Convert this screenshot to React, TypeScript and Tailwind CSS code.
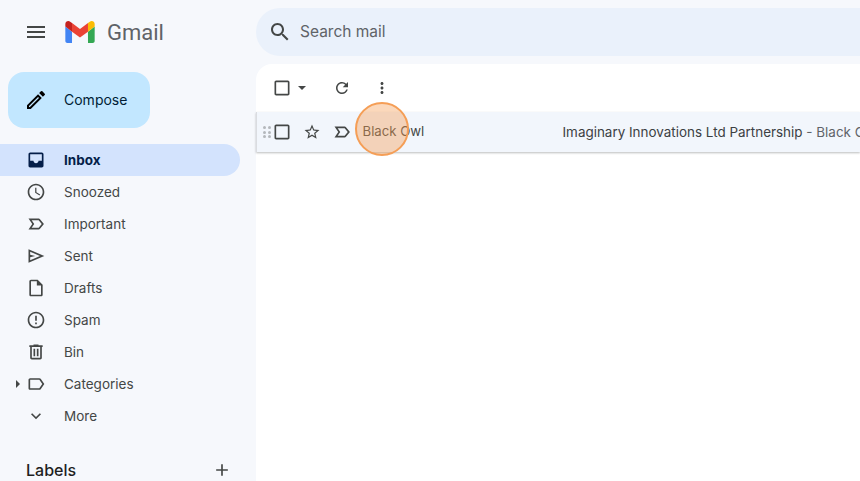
import type { ReactNode } from "react";

const font = { fontFamily: "Inter, Roboto, sans-serif" };

function Icon({ d, className = "h-5 w-5", fill = "#444746" }: { d: string; className?: string; fill?: string }) {
  return (
    <svg viewBox="0 0 24 24" className={`shrink-0 ${className}`} fill={fill} aria-hidden>
      <path d={d} />
    </svg>
  );
}

const paths = {
  menu: "M3 18h18v-2H3v2zm0-5h18v-2H3v2zm0-7v2h18V6H3z",
  search:
    "M15.5 14h-.79l-.28-.27C15.41 12.59 16 11.11 16 9.5 16 5.91 13.09 3 9.5 3S3 5.91 3 9.5 5.91 16 9.5 16c1.61 0 3.09-.59 4.23-1.57l.27.28v.79l5 4.99L20.49 19l-4.99-5zm-6 0C7.01 14 5 11.99 5 9.5S7.01 5 9.5 5 14 7.01 14 9.5 11.99 14 9.5 14z",
  pencil:
    "M3 17.25V21h3.75L17.81 9.94l-3.75-3.75L3 17.25zM5.92 19H5v-.92l9.06-9.06.92.92L5.92 19zM20.71 7.04a1 1 0 0 0 0-1.41l-2.34-2.34a1 1 0 0 0-1.41 0l-1.83 1.83 3.75 3.75 1.83-1.83z",
  inbox:
    "M19 3H5c-1.1 0-2 .9-2 2v14c0 1.1.9 2 2 2h14c1.1 0 2-.9 2-2V5c0-1.1-.9-2-2-2zm0 10h-4c0 1.66-1.35 3-3 3s-3-1.34-3-3H5V5h14v8z",
  clock:
    "M11.99 2C6.47 2 2 6.48 2 12s4.47 10 9.99 10C17.52 22 22 17.52 22 12S17.52 2 11.99 2zM12 20c-4.42 0-8-3.58-8-8s3.58-8 8-8 8 3.58 8 8-3.58 8-8 8zm.5-13H11v6l5.25 3.15.75-1.23-4.5-2.67V7z",
  important:
    "M3 18.5 7.5 12 3 5.5h12.2c.63 0 1.2.3 1.6.8L21.5 12l-4.7 5.7c-.4.5-.97.8-1.6.8H3zm3.8-2h8.4l3.7-4.5-3.7-4.5H6.8l3.1 4.5-3.1 4.5z",
  sent: "M3 20V4l19 8-19 8zm2-3 11.85-5L5 7v3.5l6 1.5-6 1.5V17z",
  draft:
    "M14 2H6c-1.1 0-2 .9-2 2v16c0 1.1.9 2 2 2h12c1.1 0 2-.9 2-2V8l-6-6zm4 18H6V4h7v5h5v11z",
  spam:
    "M12 2C6.48 2 2 6.48 2 12s4.48 10 10 10 10-4.48 10-10S17.52 2 12 2zm0 18c-4.42 0-8-3.58-8-8s3.58-8 8-8 8 3.58 8 8-3.58 8-8 8zm-1-13h2v6h-2V7zm0 8h2v2h-2v-2z",
  bin:
    "M15 4V3H9v1H4v2h1v13c0 1.1.9 2 2 2h10c1.1 0 2-.9 2-2V6h1V4h-5zm2 15H7V6h10v13zM9 8h2v9H9V8zm4 0h2v9h-2V8z",
  label:
    "M17.63 5.84C17.27 5.33 16.67 5 16 5L5 5.01C3.9 5.01 3 5.9 3 7v10c0 1.1.9 1.99 2 1.99L16 19c.67 0 1.27-.33 1.63-.84L22 12l-4.37-6.16zM16 17H5V7h11l3.55 5L16 17z",
  chevron: "M16.59 8.59 12 13.17 7.41 8.59 6 10l6 6 6-6z",
  plus: "M19 13h-6v6h-2v-6H5v-2h6V5h2v6h6v2z",
  checkbox:
    "M19 5v14H5V5h14m0-2H5c-1.1 0-2 .9-2 2v14c0 1.1.9 2 2 2h14c1.1 0 2-.9 2-2V5c0-1.1-.9-2-2-2z",
  refresh:
    "M17.65 6.35A7.96 7.96 0 0 0 12 4c-4.42 0-7.99 3.58-7.99 8s3.57 8 7.99 8c3.73 0 6.84-2.55 7.73-6h-2.08A5.99 5.99 0 0 1 12 18c-3.31 0-6-2.69-6-6s2.69-6 6-6c1.66 0 3.14.69 4.22 1.78L13 11h7V4l-2.35 2.35z",
  dots:
    "M12 8c1.1 0 2-.9 2-2s-.9-2-2-2-2 .9-2 2 .9 2 2 2zm0 2c-1.1 0-2 .9-2 2s.9 2 2 2 2-.9 2-2-.9-2-2-2zm0 6c-1.1 0-2 .9-2 2s.9 2 2 2 2-.9 2-2-.9-2-2-2z",
  star:
    "M22 9.24l-7.19-.62L12 2 9.19 8.63 2 9.24l5.46 4.73L5.82 21 12 17.27 18.18 21l-1.63-7.03L22 9.24zM12 15.4l-3.76 2.27 1-4.28-3.32-2.88 4.38-.38L12 6.1l1.71 4.04 4.38.38-3.32 2.88 1 4.28L12 15.4z",
};

const navItems = [
  { label: "Inbox", icon: paths.inbox, active: true },
  { label: "Snoozed", icon: paths.clock },
  { label: "Important", icon: paths.important },
  { label: "Sent", icon: paths.sent },
  { label: "Drafts", icon: paths.draft },
  { label: "Spam", icon: paths.spam },
  { label: "Bin", icon: paths.bin },
  { label: "Categories", icon: paths.label, caret: true },
  { label: "More", icon: paths.chevron },
];

function IconCell({ children, className = "" }: { children: ReactNode; className?: string }) {
  return <div className={`flex items-center justify-center ${className}`}>{children}</div>;
}

function GmailMark() {
  return (
    <svg viewBox="0 0 32 24" className="h-[22px] w-[30px]" aria-hidden>
      <path fill="#4285f4" d="M2.2 24h5.1V11.6L0 6.1v15.7C0 23 1 24 2.2 24z" />
      <path fill="#34a853" d="M24.7 24h5.1c1.2 0 2.2-1 2.2-2.2V6.1l-7.3 5.5z" />
      <path fill="#fbbc04" d="M24.7 2.2v9.4L32 6.1V3.3c0-2.7-3.1-4.3-5.3-2.6z" />
      <path fill="#ea4335" d="M7.3 11.6V2.2L16 8.7l8.7-6.5v9.4L16 18.1z" />
      <path fill="#c5221f" d="M0 3.3v2.8l7.3 5.5V2.2L5.3.7C3.1-1 0 .6 0 3.3z" />
    </svg>
  );
}

export default function App() {
  return (
    <div className="flex h-[481px] w-[860px] overflow-hidden bg-[#f6f8fc] text-[#444746]" style={font}>
      <aside className="flex w-[256px] shrink-0 flex-col">
        <div className="flex h-[64px] shrink-0 items-center">
          <IconCell className="ml-[12px] h-[48px] w-[48px]">
            <Icon d={paths.menu} className="h-6 w-6" />
          </IconCell>
          <div className="ml-[5px] flex">
            <GmailMark />
          </div>
          <span className="ml-[12px] mt-[2px] text-[22px] leading-none text-[#5f6368]" style={{ fontFamily: "Roboto, sans-serif" }}>
            Gmail
          </span>
        </div>
        <div className="ml-[8px] mt-[8px] flex h-[56px] w-[142px] shrink-0 items-center rounded-2xl bg-[#c2e7ff]">
          <IconCell className="ml-[16px] h-6 w-6">
            <Icon d={paths.pencil} className="h-6 w-6" fill="#000000" />
          </IconCell>
          <span className="ml-[16px] text-sm text-[#001d35]">Compose</span>
        </div>
        <nav className="mt-[16px] flex w-[240px] shrink-0 flex-col">
          {navItems.map((item) => (
            <div
              key={item.label}
              className={`relative flex h-[32px] items-center rounded-r-2xl pl-[26px] ${item.active ? "bg-[#d3e3fd] font-bold text-[#041e49]" : ""}`}
            >
              {item.caret && <span className="absolute left-[16px] top-[12px] h-0 w-0 border-y-4 border-l-4 border-y-transparent border-l-[#444746]" />}
              <Icon d={item.icon} fill={item.active ? "#041e49" : "#444746"} />
              <span className="ml-[18px] mt-px text-[13.5px]">{item.label}</span>
            </div>
          ))}
        </nav>
        <div className="ml-[26px] mr-[24px] mt-[26px] flex shrink-0 items-center justify-between">
          <span className="text-base font-medium text-[#1f1f1f]">Labels</span>
          <Icon d={paths.plus} />
        </div>
      </aside>

      <main className="flex min-w-0 flex-1 flex-col">
        <div className="mt-[8px] flex h-[48px] w-[800px] shrink-0 items-center rounded-l-3xl bg-[#eaf1fb] pl-[12px]">
          <Icon d={paths.search} className="h-6 w-6" />
          <span className="ml-[8px] text-[15.5px] text-[#5f6368]">Search mail</span>
        </div>
        <section className="mt-[8px] flex-1 rounded-tl-2xl bg-white">
          <div className="flex h-[48px] items-center pl-[16px]">
            <Icon d={paths.checkbox} />
            <span className="ml-[6px] h-0 w-0 border-x-[4.5px] border-t-[4.5px] border-x-transparent border-t-[#444746]" />
            <Icon d={paths.refresh} className="ml-[27px] h-[18px] w-[18px]" />
            <Icon d={paths.dots} className="ml-[22px] h-[18px] w-[18px]" />
          </div>
          <div className="relative flex h-[40px] items-center bg-[#f2f6fc] shadow-[inset_1px_0_0_#dadce0,0_1px_2px_rgba(60,64,67,0.35)]">
            <div className="ml-[7px] grid shrink-0 grid-cols-2 gap-[1.5px]">
              {[0, 1, 2, 3, 4, 5].map((dot) => (
                <span key={dot} className="h-[3px] w-[3px] rounded-full bg-[#b4b8bc]" />
              ))}
            </div>
            <Icon d={paths.checkbox} className="ml-[1px] h-5 w-5" />
            <Icon d={paths.star} className="ml-[11px] h-[18px] w-[18px]" />
            <Icon d={paths.important} className="ml-[11px] h-5 w-5" />
            <span className="ml-[11px] w-[200px] shrink-0 text-[13.2px] text-[#444746]">Black Owl</span>
            <span className="whitespace-nowrap text-[13.45px] text-[#3c4043]">
              Imaginary Innovations Ltd Partnership<span className="text-[#5f6368]"> - Black Owl</span>
            </span>
            <div className="absolute left-[99px] top-[-10px] h-[54px] w-[54px] rounded-full border-2 border-[#f59e56] bg-[#f59e56]/40" />
          </div>
        </section>
      </main>
    </div>
  );
}
